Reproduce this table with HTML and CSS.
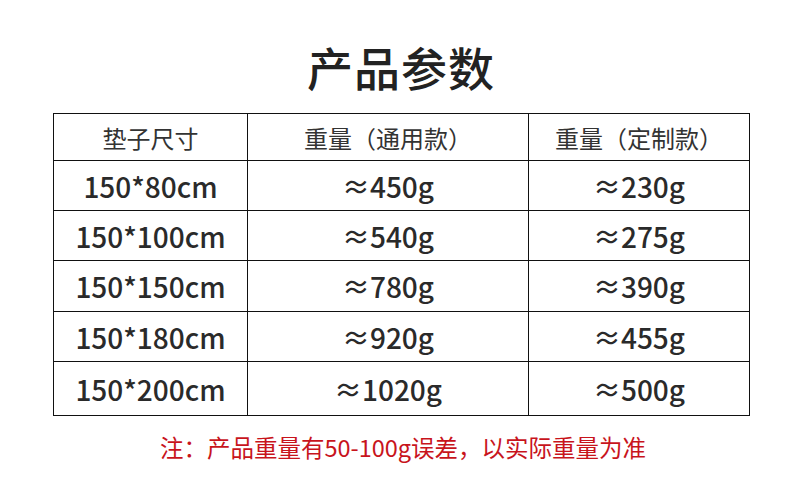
FILE: index.html
```html
<!DOCTYPE html>
<html lang="zh-CN">
<head>
<meta charset="utf-8">
<link rel="stylesheet" href="styles.css">
</head>
<body>
<div class="page">
  <h1 class="title">产品参数</h1>
  <table class="spec">
    <tr class="head">
      <th class="c1">垫子尺寸</th>
      <th class="c2">重量（通用款）</th>
      <th class="c3">重量（定制款）</th>
    </tr>
    <tr class="r"><td>150*80cm</td><td>≈450g</td><td>≈230g</td></tr>
    <tr class="r"><td>150*100cm</td><td>≈540g</td><td>≈275g</td></tr>
    <tr class="r r51"><td>150*150cm</td><td>≈780g</td><td>≈390g</td></tr>
    <tr class="r"><td>150*180cm</td><td>≈920g</td><td>≈455g</td></tr>
    <tr class="r last"><td>150*200cm</td><td>≈1020g</td><td>≈500g</td></tr>
  </table>
  <p class="note">注：产品重量有50-100g误差，以实际重量为准</p>
</div>
</body>
</html>
```
FILE: styles.css
```css
html, body {
  margin: 0;
  padding: 0;
  background: #fff;
}
.page {
  width: 790px;
  height: 496px;
  padding-top: 38px;
  box-sizing: border-box;
  font-family: "Noto Sans CJK SC", "Noto Sans", sans-serif;
  color: #222;
}
.title {
  margin: 0;
  text-align: center;
  font-size: 46px;
  line-height: 56px;
  font-weight: 500;
  color: #222;
  padding-left: 12px;
  letter-spacing: 1px;
}
.spec {
  margin: 19px 0 0 53px;
  width: 693px;
  border-collapse: collapse;
  table-layout: fixed;
}
.spec th, .spec td {
  border: 1px solid #111;
  text-align: center;
  padding: 0;
}
.c1 { width: 193px; }
.c2 { width: 280px; }
.c3 { width: 220px; }
.head th {
  height: 46px;
  font-size: 24px;
  font-weight: 400;
  color: #333;
}
.r td {
  height: 49px;
  font-size: 28px;
  font-weight: 500;
  color: #2a2a2a;
}
.r51 td { height: 50px; }
.last td { height: 53px; }
.note {
  margin: 16px 0 0 0;
  text-align: center;
  padding-left: 16px;
  font-size: 23.5px;
  line-height: 30px;
  color: #c8141c;
}
```
